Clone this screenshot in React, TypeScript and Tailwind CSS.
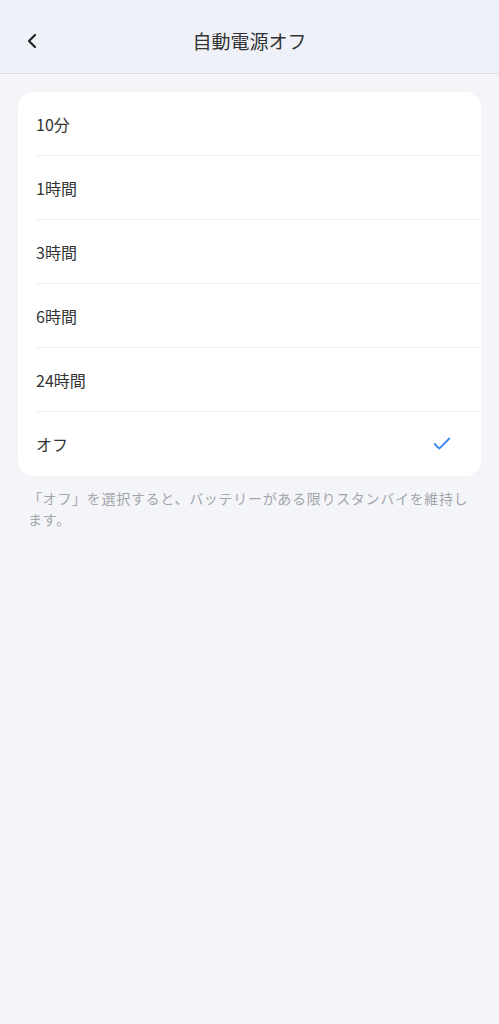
import { ChevronLeft, Check } from 'lucide-react'

const options = ['10分', '1時間', '3時間', '6時間', '24時間', 'オフ']

export default function App() {
  const selected = 'オフ'

  return (
    <div
      className="min-h-[1024px] w-full bg-[#f4f5f9] text-[#333333]"
      style={{ fontFamily: '"Noto Sans CJK JP", "Noto Sans", sans-serif' }}
    >
      <header className="relative flex h-[74px] items-center justify-center border-b border-[#dcdee3] bg-[#eef1f8]">
        <button className="absolute left-[20px] top-[29px] text-[#222222]">
          <ChevronLeft size={24} strokeWidth={2.2} />
        </button>
        <h1 className="mt-[10px] text-[19px] font-normal text-[#333333]">自動電源オフ</h1>
      </header>

      <div className="px-[18px] pt-[18px]">
        <div className="overflow-hidden rounded-[16px] bg-white">
          {options.map((opt, i) => (
            <div key={opt} className="pl-[18px]">
              <div
                className={`flex h-[64px] items-center justify-between pr-[28px] ${
                  i < options.length - 1 ? 'border-b border-[#eeeff2]' : ''
                }`}
              >
                <span className="text-[16px] text-[#333333]">{opt}</span>
                {opt === selected && <Check size={22} strokeWidth={2} className="text-[#3b87f2]" />}
              </div>
            </div>
          ))}
        </div>

        <p className="mt-[12px] pl-[10px] text-[14px] leading-[21px] tracking-[0.7px] text-[#a3a5ab]">
          「オフ」を選択すると、バッテリーがある限りスタンバイを維持します。
        </p>
      </div>
    </div>
  )
}
